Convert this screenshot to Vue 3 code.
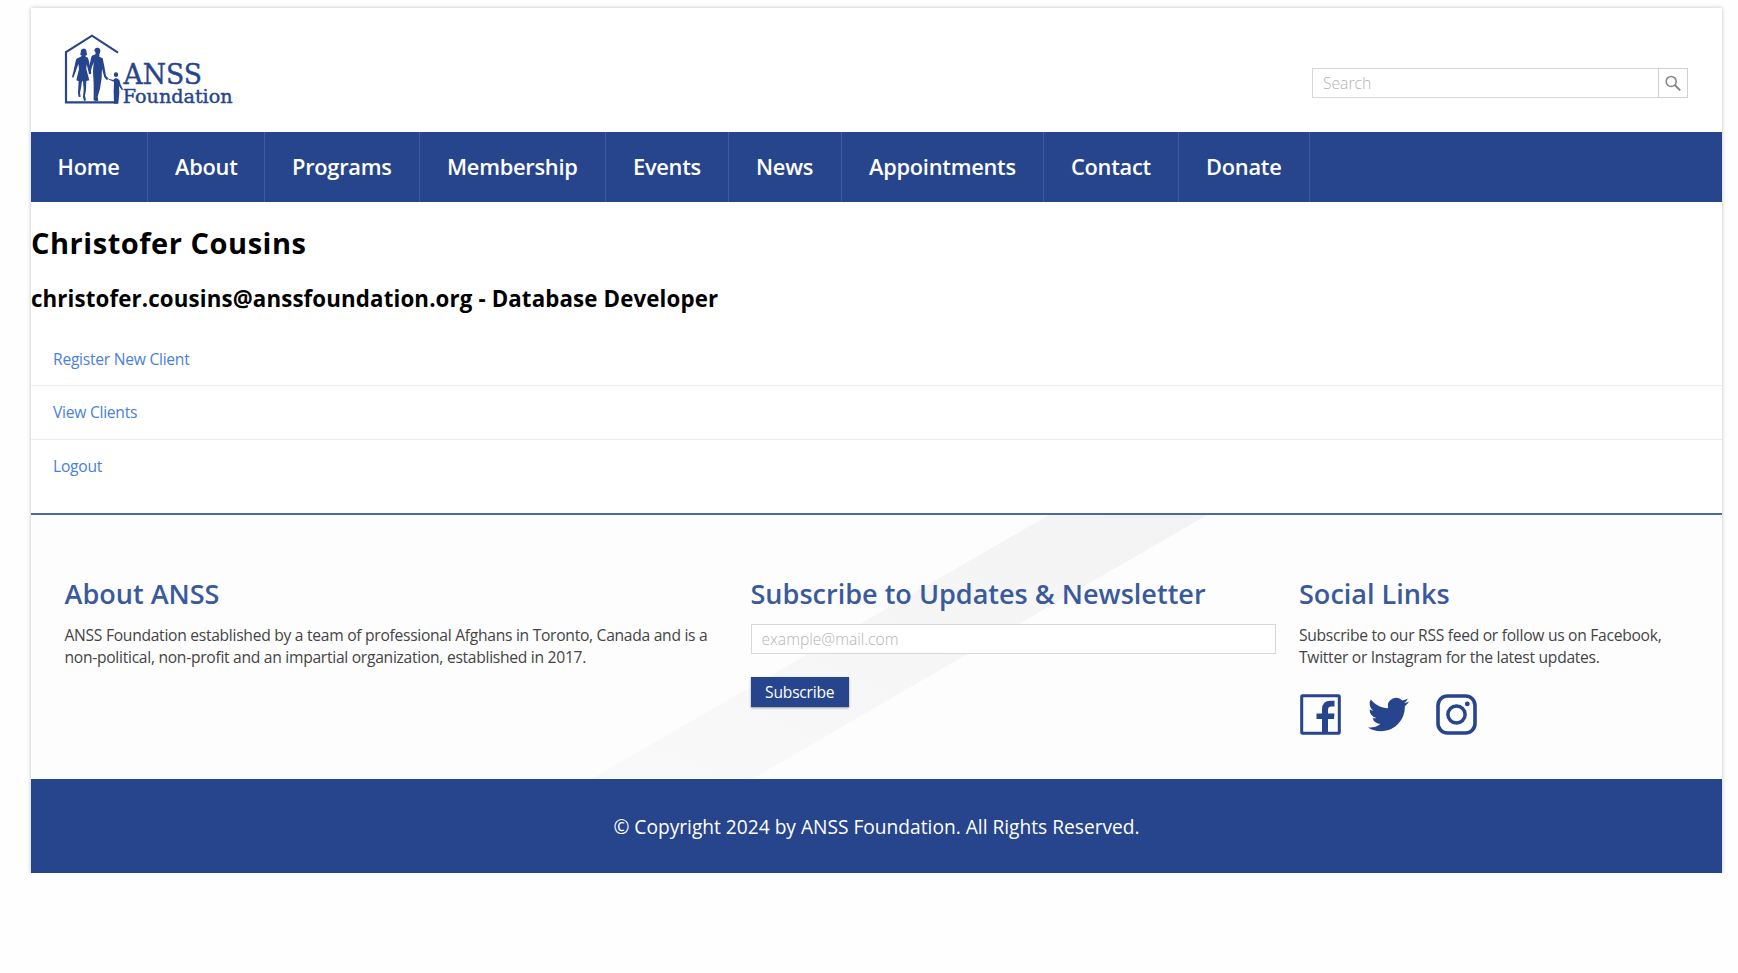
<script setup>
const navItems = [
  { label: 'Home', width: 117 },
  { label: 'About', width: 117 },
  { label: 'Programs', width: 155 },
  { label: 'Membership', width: 186 },
  { label: 'Events', width: 123 },
  { label: 'News', width: 113 },
  { label: 'Appointments', width: 202 },
  { label: 'Contact', width: 135 },
  { label: 'Donate', width: 131 }
]
const links = ['Register New Client', 'View Clients', 'Logout']
</script>

<template>
  <div class="page">
    <header class="header">
      <svg class="logo" width="172" height="76" viewBox="0 0 172 76" role="img" aria-label="ANSS Foundation">
        <g transform="translate(-3 -2) scale(0.3333)" fill="#27458c">
          <path d="M174 68 96 17 18 66V217H172" fill="none" stroke="#27458c" stroke-width="6.500" />
          <path d="M63 60q8-9 16 0l2 15q-10 6-20 0z" />
          <path d="M67 76h9l1 4 7 3 4 16 6 30-3 4-5-6-6-24-1 14 9 34-9 2-1 26-3 18 3 14-6 2-3-12 2-22-2-25h-3l-3 20-3 14 2 12-6 1-2-13 2-34-7-3 8-34-2-15-6 17-9 24-4-2 5-20 7-32q1-5 8-6l6-3z" />
          <path d="M103 62q1-10 10-9 9 1 8 12l-3 9v6l10 5 5 24 5 28 6 11-3 3-8-9-7-26-1 28-5 32-7 24 2 12-10 2 1-22-4-32-3-35 2-28-6 16-4 20-5-2 4-32 4-19q2-5 9-6l4-2-1-6z" />
          <path d="M101 130h13l-6 44-1 36-6 2z" />
          <ellipse cx="168" cy="134" rx="6.500" ry="7" />
          <path d="M139 139l7 7 14 4 5-5h6l7 5 4 14 7 14-3 3-9-13 1 20-3 33h-13l-1-38 1-28-13-5-12-8z" />
        </g>
        <g class="logo-text">
          <text x="60.500" y="52" font-size="27.500" textLength="78.500" lengthAdjust="spacingAndGlyphs">ANSS</text>
          <text x="59.800" y="71" font-size="18" textLength="109.800" lengthAdjust="spacingAndGlyphs">Foundation</text>
        </g>
      </svg>
      <form class="search" @submit.prevent>
        <input type="text" placeholder="Search" aria-label="Search" />
        <button type="submit" aria-label="Search">
          <svg width="18" height="18" viewBox="0 0 18 18" fill="none" stroke="#858585">
            <circle cx="6.200" cy="6.400" r="5" stroke-width="1.500" />
            <path d="M9.800 10 15.200 15.400" stroke-width="2" />
          </svg>
        </button>
      </form>
    </header>

    <nav class="nav">
      <a v-for="item in navItems" :key="item.label" :style="{ width: item.width + 'px' }">{{ item.label }}</a>
    </nav>

    <main class="main">
      <h1>Christofer Cousins</h1>
      <h2>christofer.cousins@anssfoundation.org - Database Developer</h2>
      <ul>
        <li v-for="link in links" :key="link"><a>{{ link }}</a></li>
      </ul>
    </main>

    <footer class="footer">
      <svg class="stripe" width="1691" height="264" viewBox="0 0 1691 264" aria-hidden="true">
        <defs>
          <linearGradient id="band" x1="0" y1="1" x2="1" y2="0">
            <stop offset="0" stop-color="#f9f9f9" />
            <stop offset="1" stop-color="#f3f3f3" />
          </linearGradient>
        </defs>
        <path d="M1018 0h158L721 264H560z" fill="url(#band)" />
      </svg>
      <section class="about">
        <h3>About ANSS</h3>
        <p>ANSS Foundation established by a team of professional Afghans in Toronto, Canada and is a<br />non-political, non-profit and an impartial organization, established in 2017.</p>
      </section>
      <section class="subscribe">
        <h3>Subscribe to Updates &amp; Newsletter</h3>
        <input type="email" placeholder="example@mail.com" aria-label="Email" />
        <button type="button">Subscribe</button>
      </section>
      <section class="social">
        <h3>Social Links</h3>
        <p>Subscribe to our RSS feed or follow us on Facebook,<br />Twitter or Instagram for the latest updates.</p>
        <div class="icons">
          <svg width="41" height="41" viewBox="0 0 41 41">
            <rect x="1.700" y="1.700" width="37.600" height="37.600" rx=".8" fill="none" stroke="#27458c" stroke-width="3" />
            <path d="M22 39V25h-5.500v-5.500H22v-3.900q0-8.800 8.500-8.800h4v5.600h-3.200q-3.300 0-3.300 3.400v3.700h6.500l-.5 5.500H28V39z" fill="#27458c" />
          </svg>
          <svg width="41" height="41" viewBox="0 0 24 24" fill="#27458c">
            <path d="M23.953 4.570a10 10 0 01-2.825.775 4.958 4.958 0 002.163-2.723c-.951.555-2.005.959-3.127 1.184a4.920 4.920 0 00-8.384 4.482C7.690 8.095 4.067 6.130 1.640 3.162a4.822 4.822 0 00-.666 2.475c0 1.710.870 3.213 2.188 4.096a4.904 4.904 0 01-2.228-.616v.06a4.923 4.923 0 003.946 4.827 4.996 4.996 0 01-2.212.085 4.936 4.936 0 004.604 3.417 9.867 9.867 0 01-6.102 2.105c-.390 0-.779-.023-1.170-.067a13.995 13.995 0 007.557 2.209c9.053 0 13.998-7.496 13.998-13.985 0-.210 0-.420-.015-.630A9.935 9.935 0 0024 4.590z" />
          </svg>
          <svg width="41" height="41" viewBox="0 0 41 41" fill="none" stroke="#27458c">
            <rect x="2" y="2" width="37" height="37" rx="9.500" stroke-width="3.600" />
            <circle cx="20.500" cy="20.500" r="8.600" stroke-width="3.500" />
            <circle cx="31.300" cy="9.900" r="2.400" fill="#27458c" stroke="none" />
          </svg>
        </div>
      </section>
    </footer>

    <div class="copyright">© Copyright 2024 by ANSS Foundation. All Rights Reserved.</div>
  </div>
</template>

<style>
body {
  background: #fefefe;
}
</style>

<style scoped>
.page,
.page * {
  box-sizing: border-box;
}
.page {
  width: 1691px;
  margin: 8px 0 0 31px;
  background: #fff;
  box-shadow: 0 0 4px rgba(0, 0, 0, 0.25);
  font-family: 'Open Sans', sans-serif;
  font-size: 15.640px;
}
.header {
  display: flex;
  justify-content: space-between;
  height: 124px;
  padding: 24px 34px 0 32px;
}
.logo {
  display: block;
}
.logo-text {
  font-family: 'DejaVu Serif', serif;
  fill: #27458c;
  stroke: #27458c;
  stroke-width: 0.4px;
}
input {
  border: 1px solid #d8d8d8;
  border-radius: 0;
  background: #fff;
  padding: 0 10px;
  font: 300 15.640px 'Open Sans', sans-serif;
  outline: 0;
}
input::placeholder {
  color: #b4b4b4;
  opacity: 1;
}
.search {
  display: flex;
  width: 376px;
  height: 30px;
  margin-top: 36px;
}
.search input {
  flex: 1;
  min-width: 0;
  padding-bottom: 1px;
  border-right: 0;
}
.search button {
  display: flex;
  width: 30px;
  padding: 6px 0 0 6px;
  border: 1px solid #d0d0d0;
  background: #fff;
}
.nav {
  display: flex;
  height: 70px;
  background: #27458c;
}
.nav a {
  flex: none;
  padding-left: 27px;
  border-right: 1px solid #3c5ba0;
  color: #fff;
  font-size: 21.800px;
  font-weight: 600;
  letter-spacing: -0.250px;
  line-height: 69px;
  white-space: nowrap;
}
.nav a:first-child {
  padding-left: 26.500px;
}
.main {
  height: 311px;
  padding-top: 21px;
}
h1 {
  margin: 0;
  color: #000;
  font-size: 29px;
  font-weight: 700;
  letter-spacing: 0.540px;
  line-height: 40px;
}
h2 {
  margin: 21px 0 0;
  color: #000;
  font-size: 22.300px;
  font-weight: 700;
  letter-spacing: 0.125px;
  line-height: 30px;
}
ul {
  margin: 18px 0 0;
  padding: 0;
  list-style: none;
}
li {
  height: 53.800px;
  padding-left: 22px;
  border-bottom: 1px solid #ececec;
  line-height: 53.500px;
}
li:first-child {
  line-height: 54px;
}
li:last-child {
  border: 0;
}
li a {
  color: #4a80dc;
  letter-spacing: -0.260px;
}
.footer {
  position: relative;
  display: flex;
  height: 266px;
  padding: 60px 0 0 33.500px;
  border-top: 2px solid #4d69a4;
  background: #fdfdfd;
}
.stripe {
  position: absolute;
  top: 0;
  left: 0;
}
section {
  position: relative;
}
.about {
  width: 686px;
}
.subscribe {
  width: 548.500px;
}
h3 {
  margin: 0;
  color: #3a5a9c;
  font-size: 27.050px;
  font-weight: 600;
  line-height: 37px;
}
p {
  margin: 12px 0 0;
  color: #444;
  letter-spacing: -0.282px;
  line-height: 22.400px;
  white-space: nowrap;
}
.subscribe input {
  display: block;
  width: 525px;
  height: 30px;
  margin-top: 12px;
}
.subscribe button {
  display: block;
  width: 98.500px;
  height: 30px;
  margin-top: 22.500px;
  padding: 0;
  border: 0;
  background: #27458c;
  box-shadow: 0 1px 2px rgba(0, 0, 0, 0.4);
  color: #fff;
  font: 400 15.640px 'Open Sans', sans-serif;
  letter-spacing: -0.220px;
}
.icons {
  display: flex;
  gap: 27px;
  margin: 25.500px 0 0 0.500px;
}
.copyright {
  height: 94px;
  background: #27458c;
  color: #fff;
  font-size: 19.170px;
  line-height: 96px;
  text-align: center;
}
</style>
